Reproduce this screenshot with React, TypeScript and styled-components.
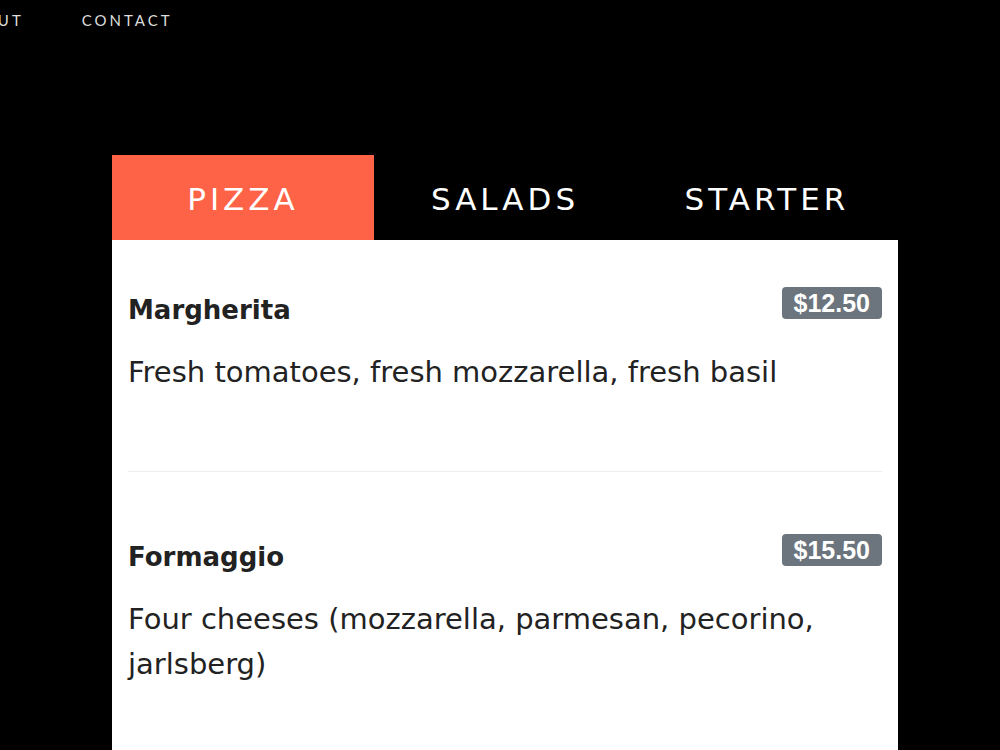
import styled, { createGlobalStyle } from 'styled-components';

const GlobalStyle = createGlobalStyle`
  html, body {
    margin: 0;
    padding: 0;
    background: #000;
    overflow: hidden;
  }
  body {
    font-family: "Comic Sans MS", "DejaVu Sans", sans-serif;
  }
`;

const menu = [
  { name: 'Margherita', price: '$12.50', desc: 'Fresh tomatoes, fresh mozzarella, fresh basil' },
  { name: 'Formaggio', price: '$15.50', desc: 'Four cheeses (mozzarella, parmesan, pecorino, jarlsberg)' },
];

const App = () => {
  return (
    <Page>
      <GlobalStyle />
      <Nav>
        <NavLink>ABOUT</NavLink>
        <NavLink>CONTACT</NavLink>
      </Nav>

      <Menu>
        <Tabs>
          <Tab active>PIZZA</Tab>
          <Tab>SALADS</Tab>
          <Tab>STARTER</Tab>
        </Tabs>
        <Panel>
          {menu.map((item, i) => (
            <div key={item.name}>
              {i > 0 && <Divider />}
              <Item>
                <ItemHead>
                  <ItemName>{item.name}</ItemName>
                  <Price>{item.price}</Price>
                </ItemHead>
                <ItemDesc>{item.desc}</ItemDesc>
              </Item>
            </div>
          ))}
        </Panel>
      </Menu>
    </Page>
  );
};

const Page = styled.div`
  min-height: 750px;
  background: #000;
`;

const Nav = styled.nav`
  display: flex;
  height: 40px;
  align-items: center;
  margin-left: -43px;
  gap: 58px;
`;

const NavLink = styled.a`
  font-family: "Lato", "Open Sans", sans-serif;
  font-size: 15px;
  letter-spacing: 3px;
  color: #ddd;
  cursor: pointer;
`;

const Menu = styled.div`
  width: 786px;
  margin: 115px 0 0 112px;
`;

const Tabs = styled.div`
  display: grid;
  grid-template-columns: repeat(3, 1fr);
  height: 85px;
`;

const Tab = styled.div<{ active?: boolean }>`
  display: flex;
  align-items: center;
  justify-content: center;
  background: ${(p) => (p.active ? '#ff6347' : '#000')};
  color: #fff;
  font-size: 31px;
  letter-spacing: 4px;
  padding-top: 2px;
`;

const Panel = styled.div`
  background: #fff;
  padding: 16px 16px 80px;
`;

const Item = styled.div`
  padding-top: 34px;
`;

const ItemHead = styled.div`
  display: flex;
  justify-content: space-between;
  align-items: center;
  height: 40px;
`;

const ItemName = styled.h3`
  margin: 0;
  font-size: 26px;
  font-weight: bold;
  color: #222;
`;

const Price = styled.span`
  align-self: flex-start;
  margin-top: -3px;
  background: #6c757d;
  color: #fff;
  font-family: "Liberation Sans", Arial, sans-serif;
  font-weight: bold;
  font-size: 25px;
  height: 32px;
  line-height: 32px;
  padding: 0 12px;
  border-radius: 4px;
`;

const ItemDesc = styled.p`
  margin: 20px 0 0;
  font-size: 29px;
  line-height: 45px;
  color: #222;
`;

const Divider = styled.hr`
  border: 0;
  border-top: 1px solid #eee;
  margin: 76px 0 31px;
`;

export default App;
